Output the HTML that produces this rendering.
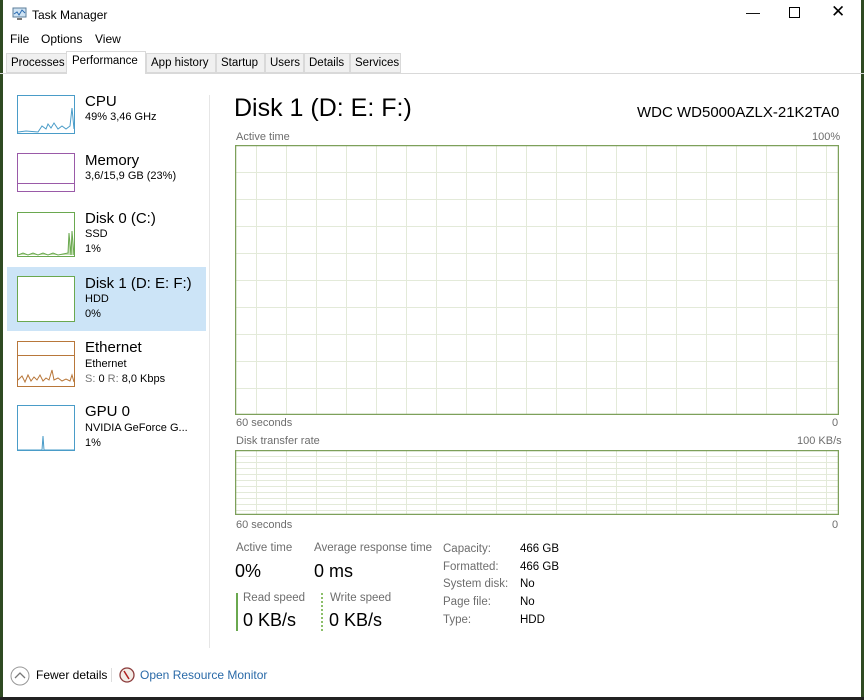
<!DOCTYPE html>
<html><head><meta charset="utf-8">
<style>
*{margin:0;padding:0;box-sizing:border-box}
body{width:864px;height:700px;background:#fff;font-family:"Liberation Sans",sans-serif;color:#000;position:relative;overflow:hidden}
.a{position:absolute;white-space:nowrap}
.s{font-size:11px;color:#6d6d6d}
.tab{position:absolute;top:53px;height:20px;font-size:11.5px;padding:3px 0 0 4px;border:1px solid #d9d9d9;background:#f0f0f0;color:#000;white-space:nowrap;overflow:hidden}
.th{position:absolute;left:17px;width:58px;background:#fff;border:1px solid}
.t1{font-size:15px}
.t2{font-size:11px}
</style></head><body>
<div class="a" style="left:0;top:0;width:3px;height:700px;background:#2f4a22"></div>
<div class="a" style="left:861px;top:0;width:3px;height:700px;background:#2f4a22"></div>
<div class="a" style="left:0;top:697px;width:864px;height:3px;background:#222"></div>

<!-- title -->
<svg class="a" style="left:12px;top:7px" width="16" height="14"><rect x="1" y="1" width="13" height="9" fill="#cfe3f3" stroke="#5b7d9a"/><polyline points="2,7 5,5 7,8 10,3 13,6" fill="none" stroke="#2a6ab0"/><rect x="5" y="11" width="5" height="2" fill="#777"/></svg>
<div class="a" style="left:32px;top:8px;font-size:12px">Task Manager</div>
<div class="a" style="left:746px;top:4px;font-size:14px">&#8212;</div>
<div class="a" style="left:789px;top:7px;width:11px;height:11px;border:1px solid #000"></div>
<div class="a" style="left:831px;top:2px;font-size:17px">&#10005;</div>
<div class="a" style="left:10px;top:32px;font-size:12px">File</div>
<div class="a" style="left:41px;top:32px;font-size:12px">Options</div>
<div class="a" style="left:95px;top:32px;font-size:12px">View</div>

<!-- tabs -->
<div class="a" style="left:0;top:73px;width:864px;height:1px;background:#d9d9d9"></div>
<div class="tab" style="left:6px;width:61px">Processes</div>
<div class="tab" style="left:66px;top:51px;height:23px;width:80px;background:#fff;border-bottom:none;padding-top:3px;padding-left:5px">Performance</div>
<div class="tab" style="left:146px;width:70px">App history</div>
<div class="tab" style="left:216px;width:49px">Startup</div>
<div class="tab" style="left:265px;width:39px">Users</div>
<div class="tab" style="left:304px;width:46px">Details</div>
<div class="tab" style="left:350px;width:51px">Services</div>

<!-- sidebar -->
<div class="a" style="left:209px;top:95px;width:1px;height:553px;background:#e6e6e6"></div>
<div class="a" style="left:7px;top:267px;width:199px;height:64px;background:#cce4f7"></div>

<div class="th" style="top:95px;height:39px;border-color:#4a9cc8"><svg width="56" height="37"><polyline points="0,36 8,35 20,36 24,30 28,33 30,28 33,32 36,27 40,33 44,30 48,33 52,30 54,12 56,33" fill="none" stroke="#4a9cc8"/></svg></div>
<div class="a t1" style="left:85px;top:93px">CPU</div>
<div class="a t2" style="left:85px;top:111px">49% 3,46 GHz</div>

<div class="th" style="top:153px;height:39px;border-color:#9a5aa8"><div style="position:absolute;left:0;right:0;top:29px;border-top:1px solid #9a5aa8"></div></div>
<div class="a t1" style="left:85px;top:152px">Memory</div>
<div class="a t2" style="left:85px;top:170px">3,6/15,9 GB (23%)</div>

<div class="th" style="top:212px;height:45px;border-color:#6aa84f"><svg width="56" height="43"><polyline points="0,42 5,40 10,42 15,40 20,42 25,40 30,42 35,40 40,42 45,41 50,40 51,20 53,42 54,18 56,42" fill="#c5e0b4" stroke="#6aa84f"/></svg></div>
<div class="a t1" style="left:85px;top:210px">Disk 0 (C:)</div>
<div class="a t2" style="left:85px;top:228px">SSD</div>
<div class="a t2" style="left:85px;top:243px">1%</div>

<div class="th" style="top:276px;height:46px;border-color:#6aa84f"></div>
<div class="a t1" style="left:85px;top:275px">Disk 1 (D: E: F:)</div>
<div class="a t2" style="left:85px;top:293px">HDD</div>
<div class="a t2" style="left:85px;top:308px">0%</div>

<div class="th" style="top:341px;height:46px;border-color:#b8773a"><div style="position:absolute;left:0;right:0;top:13px;border-top:1px solid #b8773a"></div><svg width="56" height="44" style="position:absolute;left:0;top:0"><polyline points="0,38 4,34 7,40 10,33 13,39 16,35 19,38 22,33 25,39 28,36 31,38 34,28 36,38 40,36 44,39 48,37 52,39 54,33 56,40" fill="none" stroke="#b8773a"/></svg></div>
<div class="a t1" style="left:85px;top:339px">Ethernet</div>
<div class="a t2" style="left:85px;top:358px">Ethernet</div>
<div class="a t2" style="left:85px;top:373px"><span style="color:#777">S:</span> 0 <span style="color:#777">R:</span> 8,0 Kbps</div>

<div class="th" style="top:405px;height:46px;border-color:#4a9cc8"><svg width="56" height="44"><polyline points="0,44 24,44 25,30 26,44 56,44" fill="none" stroke="#4a9cc8"/></svg></div>
<div class="a t1" style="left:85px;top:403px">GPU 0</div>
<div class="a t2" style="left:85px;top:422px">NVIDIA GeForce G...</div>
<div class="a t2" style="left:85px;top:437px">1%</div>

<!-- main -->
<div class="a" style="left:234px;top:94px;font-size:25px">Disk 1 (D: E: F:)</div>
<div class="a" style="left:637px;top:104px;font-size:15px">WDC WD5000AZLX-21K2TA0</div>
<div class="a s" style="left:236px;top:131px">Active time</div>
<div class="a s" style="left:812px;top:131px">100%</div>
<svg class="a" style="left:235px;top:145px" width="604" height="270">
<g stroke="#e3ead9" stroke-width="1">
<path d="M21.5 0V270M51.5 0V270M81.5 0V270M111.5 0V270M141.5 0V270M171.5 0V270M201.5 0V270M231.5 0V270M261.5 0V270M291.5 0V270M321.5 0V270M351.5 0V270M381.5 0V270M411.5 0V270M441.5 0V270M471.5 0V270M501.5 0V270M531.5 0V270M561.5 0V270M591.5 0V270"/>
<path d="M0 27.5H604M0 54.5H604M0 81.5H604M0 108.5H604M0 135.5H604M0 162.5H604M0 189.5H604M0 216.5H604M0 243.5H604"/>
</g>
<rect x="0.5" y="0.5" width="603" height="269" fill="none" stroke="#7da05a" stroke-width="1.5"/>
</svg>
<div class="a s" style="left:236px;top:417px">60 seconds</div>
<div class="a s" style="left:832px;top:417px">0</div>
<div class="a s" style="left:236px;top:435px">Disk transfer rate</div>
<div class="a s" style="left:797px;top:435px">100 KB/s</div>
<svg class="a" style="left:235px;top:450px" width="604" height="65">
<g stroke="#e3ead9" stroke-width="1">
<path d="M21.5 0V65M51.5 0V65M81.5 0V65M111.5 0V65M141.5 0V65M171.5 0V65M201.5 0V65M231.5 0V65M261.5 0V65M291.5 0V65M321.5 0V65M351.5 0V65M381.5 0V65M411.5 0V65M441.5 0V65M471.5 0V65M501.5 0V65M531.5 0V65M561.5 0V65M591.5 0V65"/>
<path d="M0 6.5H604M0 12.5H604M0 18.5H604M0 24.5H604M0 30.5H604M0 36.5H604M0 42.5H604M0 48.5H604M0 54.5H604M0 60.5H604"/>
</g>
<rect x="0.5" y="0.5" width="603" height="64" fill="none" stroke="#7da05a" stroke-width="1.5"/>
</svg>
<div class="a s" style="left:236px;top:519px">60 seconds</div>
<div class="a s" style="left:832px;top:519px">0</div>

<div class="a s" style="left:236px;top:542px;font-size:11.5px">Active time</div>
<div class="a" style="left:235px;top:561px;font-size:18px">0%</div>
<div class="a s" style="left:314px;top:542px;font-size:11.5px">Average response time</div>
<div class="a" style="left:314px;top:561px;font-size:18px">0 ms</div>
<div class="a" style="left:236px;top:593px;width:2px;height:38px;background:#6aa84f"></div>
<div class="a s" style="left:243px;top:592px;font-size:11.5px">Read speed</div>
<div class="a" style="left:243px;top:610px;font-size:18px">0 KB/s</div>
<div class="a" style="left:321px;top:593px;width:0;height:38px;border-left:2px dotted #8cbf6a"></div>
<div class="a s" style="left:330px;top:592px;font-size:11.5px">Write speed</div>
<div class="a" style="left:329px;top:610px;font-size:18px">0 KB/s</div>

<div class="a s" style="left:443px;top:541px;font-size:11.5px;line-height:17.7px">Capacity:<br>Formatted:<br>System disk:<br>Page file:<br>Type:</div>
<div class="a" style="left:520px;top:541px;font-size:11.5px;line-height:17.7px">466 GB<br>466 GB<br>No<br>No<br>HDD</div>

<!-- footer -->
<svg class="a" style="left:10px;top:666px" width="20" height="20"><circle cx="10" cy="10" r="9" fill="none" stroke="#999"/><polyline points="5,12 10,7 15,12" fill="none" stroke="#777" stroke-width="1.3"/></svg>
<div class="a" style="left:36px;top:668px;font-size:12px">Fewer details</div>
<div class="a" style="left:111px;top:668px;width:1px;height:14px;background:#ddd"></div>
<svg class="a" style="left:119px;top:667px" width="16" height="16"><circle cx="8" cy="8" r="7" fill="#f3ece6" stroke="#8b3a3a" stroke-width="1.3"/><line x1="5" y1="4" x2="10" y2="12" stroke="#b02020" stroke-width="1.5"/></svg>
<div class="a" style="left:140px;top:668px;font-size:12px;color:#2a6aa8">Open Resource Monitor</div>
</body></html>
